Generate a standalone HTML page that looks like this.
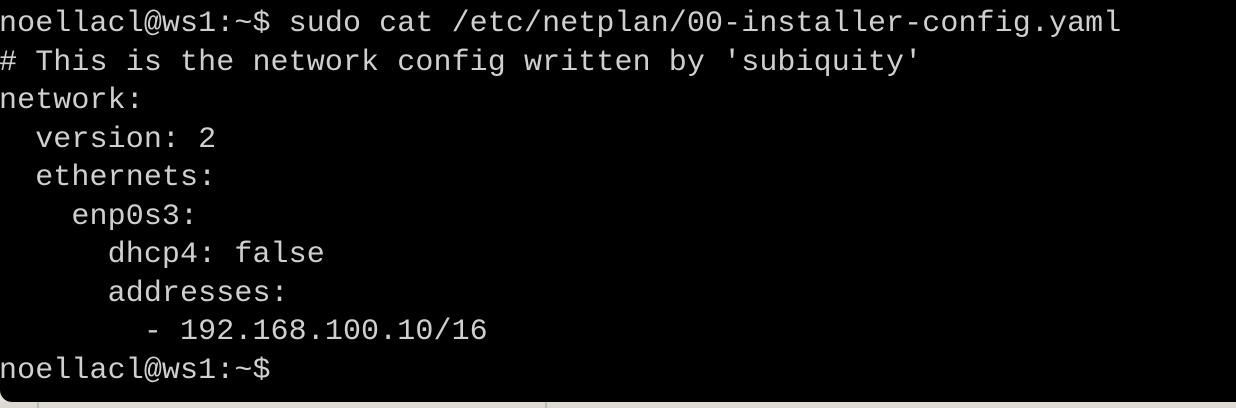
<!DOCTYPE html>
<html><head><style>
html,body{margin:0;padding:0;width:1236px;height:408px;overflow:hidden;background:#e4e0da;}
.term{position:absolute;left:0;top:0;width:1236px;height:402px;background:#000;border-bottom-left-radius:12px;}
pre{position:absolute;left:-1px;top:5px;margin:0;font-family:"Liberation Mono",monospace;font-size:30px;line-height:38.55px;color:#cfcfcf;letter-spacing:0.1px;}
.bot{position:absolute;top:402px;left:0;width:1236px;height:6px;background:#ddd9d3;}
.l1{position:absolute;top:402px;left:37px;width:2px;height:6px;background:#bbb;}
.l2{position:absolute;top:402px;left:545px;width:2px;height:6px;background:#bbb;}
</style></head><body>
<div class="bot"></div><div class="l1"></div><div class="l2"></div>
<div class="term">
<pre>noellacl@ws1:~$ sudo cat /etc/netplan/00-installer-config.yaml
# This is the network config written by 'subiquity'
network:
  version: 2
  ethernets:
    enp0s3:
      dhcp4: false
      addresses:
        - 192.168.100.10/16
noellacl@ws1:~$</pre>
</div>
</body></html>
